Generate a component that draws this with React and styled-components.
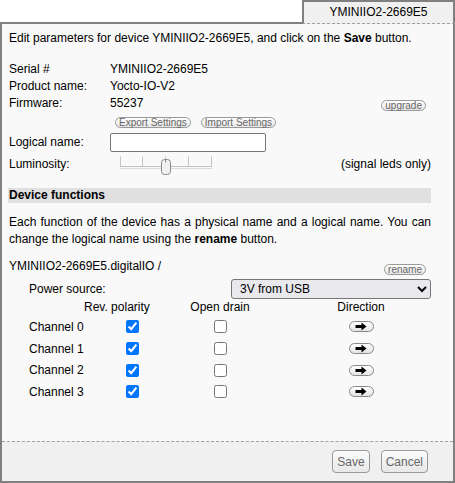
import React from "react";
import styled, { createGlobalStyle } from "styled-components";

const GlobalStyle = createGlobalStyle`
  html, body {
    margin: 0;
    padding: 0;
    background: #fff;
  }
  body {
    font-family: "Liberation Sans", Arial, sans-serif;
    font-size: 12px;
    color: #000;
  }
`;

const Frame = styled.div`
  width: 455px;
  height: 483px;
  display: flex;
  flex-direction: column;
`;

const TabStrip = styled.div`
  display: flex;
  height: 24px;
`;

const TabFiller = styled.div`
  flex: 1;
  border-bottom: 2px solid #808080;
`;

const Tab = styled.div`
  width: 149px;
  border: 2px solid #808080;
  border-bottom: 1px dashed #a0a0a0;
  background: #f0f0f0;
  text-align: center;
  line-height: 21px;
`;

const Panel = styled.div`
  flex: 1;
  display: flex;
  flex-direction: column;
  border: 2px solid #808080;
  border-top: none;
  background: #f9f9f9;
`;

const Body = styled.div`
  flex: 1;
  padding: 6px 22px 0 7px;
`;

const Para = styled.p`
  margin: ${(p) => p.$margin || "0"};
  line-height: 17px;
  text-align: ${(p) => (p.$justify ? "justify" : "left")};
  b {
    font-weight: bold;
  }
`;

const Row = styled.div`
  display: flex;
  align-items: ${(p) => p.$align || "flex-start"};
  height: ${(p) => p.$height || "17px"};
  margin-top: ${(p) => p.$top || "0"};
  padding-left: ${(p) => p.$indent || "0"};
  line-height: 17px;
`;

const Label = styled.div`
  width: ${(p) => p.$width || "101px"};
  flex-shrink: 0;
  white-space: nowrap;
`;

const Value = styled.div`
  flex: 1;
  white-space: nowrap;
`;

const SmallButton = styled.button`
  height: 11px;
  padding: 0 3px;
  margin: ${(p) => p.$margin || "0"};
  border: 1px solid #999;
  border-radius: 6px;
  background: linear-gradient(#ffffff, #e6e6e6);
  color: #666;
  font-family: "Liberation Sans", Arial, sans-serif;
  font-size: 10px;
  line-height: 9px;
  box-sizing: border-box;
  white-space: nowrap;
`;

const ButtonRow = styled.div`
  display: flex;
  gap: 10px;
  height: 11px;
  margin: 5px 0 0 106px;
`;

const TextInput = styled.input`
  width: 156px;
  height: 19px;
  box-sizing: border-box;
  border: 1px solid #767676;
  border-radius: 2px;
  background: #fff;
  padding: 0 3px;
  margin: 0;
  font-family: "Liberation Sans", Arial, sans-serif;
  font-size: 12px;
`;

const Slider = styled.svg`
  margin-left: 5px;
  flex-shrink: 0;
`;

const Note = styled.div`
  margin-left: auto;
  white-space: nowrap;
`;

const Band = styled.div`
  margin: 13px 0 0 -1px;
  padding-left: 1px;
  height: 15px;
  line-height: 15px;
  background: #e0e0e0;
  font-weight: bold;
`;

const Select = styled.select`
  width: 200px;
  height: 20px;
  margin: 0;
  border: 1px solid #767676;
  border-radius: 3px;
  background-color: #e9e9ed;
  padding: 0 0 0 4px;
  font-family: "Liberation Sans", Arial, sans-serif;
  font-size: 12px;
  color: #000;
`;

const Table = styled.div`
  display: grid;
  grid-template-columns: 55px 65px 142px 1fr;
  grid-template-rows: 17px repeat(4, 21.7px);
  margin-left: 20px;
  align-items: center;
`;

const HeadCell = styled.div`
  text-align: center;
  white-space: nowrap;
  line-height: 17px;
`;

const Cell = styled.div`
  display: flex;
  justify-content: ${(p) => p.$justify || "center"};
  padding-left: ${(p) => p.$pad || "0"};
  white-space: nowrap;
`;

const Check = styled.input`
  margin: 0;
  width: 13px;
  height: 13px;
`;

const DirButton = styled.button`
  width: 25px;
  height: 11px;
  padding: 0;
  border: 1px solid #888;
  border-radius: 6px;
  background: linear-gradient(#ffffff, #e4e4e4);
  display: flex;
  align-items: center;
  justify-content: center;
  box-sizing: border-box;
`;

const Footer = styled.div`
  height: 40px;
  box-sizing: border-box;
  border-top: 1px dashed #a0a0a0;
  background: #f0f0f0;
  display: flex;
  justify-content: flex-end;
  gap: 11px;
  padding: 8px 25px 0 0;
`;

const FooterButton = styled.button`
  height: 23px;
  padding: 0 4px;
  border: 1px solid #999;
  border-radius: 4px;
  background: linear-gradient(#fbfbfb, #e8e8e8);
  color: #666;
  font-family: "Liberation Sans", Arial, sans-serif;
  font-size: 12px;
`;

const Arrow = () => (
  <svg width="12" height="9" viewBox="0 0 12 9">
    <path d="M0.5 3H6.5V0.5L11.5 4.5L6.5 8.5V6H0.5Z" fill="#000" />
  </svg>
);

const LuminositySlider = () => (
  <Slider width="94" height="22" viewBox="0 0 94 22">
    {[0.5, 22.5, 45.5, 68.5, 91.5].map((x) => (
      <line key={x} x1={x} y1="3.5" x2={x} y2="13" stroke="#c4c4c4" strokeWidth="1" />
    ))}
    <line x1="0" y1="13.5" x2="92" y2="13.5" stroke="#c4c4c4" strokeWidth="1" />
    <line x1="0" y1="15.5" x2="92" y2="15.5" stroke="#dadada" strokeWidth="1" />
    <rect x="41.5" y="6.5" width="9" height="15" rx="3" fill="#f0f0f0" stroke="#8a8a8a" />
    <line x1="45.5" y1="6.5" x2="45.5" y2="9.5" stroke="#8a8a8a" strokeWidth="1" />
  </Slider>
);

const channels = [0, 1, 2, 3];

export default function App() {
  return (
    <Frame>
      <GlobalStyle />
      <TabStrip>
        <TabFiller />
        <Tab>YMINIIO2-2669E5</Tab>
      </TabStrip>
      <Panel>
        <Body>
          <Para>
            Edit parameters for device YMINIIO2-2669E5, and click on the <b>Save</b> button.
          </Para>

          <Row $top="14px">
            <Label>Serial #</Label>
            <Value>YMINIIO2-2669E5</Value>
          </Row>
          <Row>
            <Label>Product name:</Label>
            <Value>Yocto-IO-V2</Value>
          </Row>
          <Row>
            <Label>Firmware:</Label>
            <Value>55237</Value>
            <SmallButton $margin="5px 5px 0 0">upgrade</SmallButton>
          </Row>
          <ButtonRow>
            <SmallButton>Export Settings</SmallButton>
            <SmallButton>Import Settings</SmallButton>
          </ButtonRow>
          <Row $top="5px" $height="19px" $align="center">
            <Label>Logical name:</Label>
            <TextInput type="text" defaultValue="" />
          </Row>
          <Row $top="1px" $height="22px" $align="center">
            <Label $width="106px">Luminosity:</Label>
            <LuminositySlider />
            <Note>(signal leds only)</Note>
          </Row>

          <Band>Device functions</Band>

          <Para $margin="11px 0 0 0" $justify>
            Each function of the device has a physical name and a logical name. You can
            change the logical name using the <b>rename</b> button.
          </Para>

          <Row $top="10px">
            <Value>YMINIIO2-2669E5.digitalIO /</Value>
            <SmallButton $margin="6px 5px 0 0">rename</SmallButton>
          </Row>
          <Row $top="4px" $height="20px" $align="center" $indent="20px">
            <Label $width="202px">Power source:</Label>
            <Select defaultValue="usb">
              <option value="usb">3V from USB</option>
              <option value="ext">3.3V external</option>
              <option value="5v">5V from USB</option>
            </Select>
          </Row>

          <Table>
            <div />
            <HeadCell>Rev. polarity</HeadCell>
            <HeadCell>Open drain</HeadCell>
            <HeadCell>Direction</HeadCell>
            {channels.map((n) => (
              <React.Fragment key={n}>
                <Cell $justify="flex-start">Channel {n}</Cell>
                <Cell $justify="flex-start" $pad="42px">
                  <Check type="checkbox" defaultChecked />
                </Cell>
                <Cell>
                  <Check type="checkbox" />
                </Cell>
                <Cell>
                  <DirButton>
                    <Arrow />
                  </DirButton>
                </Cell>
              </React.Fragment>
            ))}
          </Table>
        </Body>
        <Footer>
          <FooterButton>Save</FooterButton>
          <FooterButton>Cancel</FooterButton>
        </Footer>
      </Panel>
    </Frame>
  );
}
